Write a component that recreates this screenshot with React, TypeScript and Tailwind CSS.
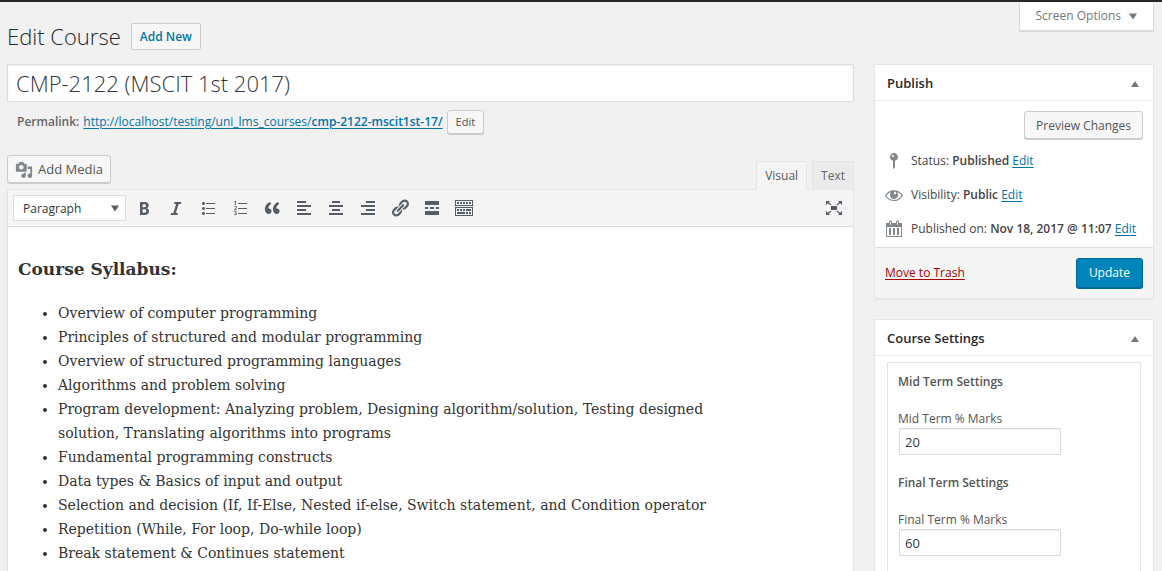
import { useState } from "react";
import type { ReactNode } from "react";

const ICONS = {
  bold: "M6 4v13h4.54c1.37 0 2.46-.33 3.26-1 .8-.66 1.2-1.58 1.2-2.77 0-.84-.17-1.51-.51-2.01s-.9-.85-1.67-1.03v-.09c.57-.1 1.02-.4 1.36-.9s.51-1.13.51-1.91c0-1.14-.39-1.98-1.17-2.5C12.75 4.26 11.5 4 9.78 4H6zm2.57 5.15V6.26h1.36c.73 0 1.27.11 1.61.32.34.22.51.58.51 1.07 0 .54-.16.92-.47 1.15s-.82.35-1.51.35h-1.5zm0 2.19h1.6c1.44 0 2.16.53 2.16 1.61 0 .6-.17 1.05-.51 1.34s-.86.43-1.57.43H8.57v-3.38z",
  italic: "M14.78 6h-2.13l-2.8 9h2.12l-.62 2H4.6l.62-2h2.14l2.8-9H8.03l.62-2h6.75z",
  bullets:
    "M5.5 7C4.67 7 4 6.33 4 5.5 4 4.68 4.67 4 5.5 4 6.32 4 7 4.68 7 5.5 7 6.33 6.32 7 5.5 7zM8 5h9v1H8V5zm-2.5 7c-.83 0-1.5-.67-1.5-1.5C4 9.68 4.67 9 5.5 9c.82 0 1.5.68 1.5 1.5 0 .83-.68 1.5-1.5 1.5zM8 10h9v1H8v-1zm-2.5 7c-.83 0-1.5-.67-1.5-1.5 0-.82.67-1.5 1.5-1.5.82 0 1.5.68 1.5 1.5 0 .83-.68 1.5-1.5 1.5zM8 15h9v1H8v-1z",
  numbers:
    "M6 7V3h-.69L4.02 4.03l.4.51.46-.37c.06-.05.16-.14.3-.28l-.02.42V7H6zm2-2h9v1H8V5zm-1.23 6.95v-.7H5.25v-.04l.51-.48c.33-.31.57-.54.7-.71.14-.17.24-.33.3-.49.07-.16.1-.33.1-.51 0-.21-.05-.4-.16-.56-.1-.16-.25-.28-.44-.37s-.41-.14-.65-.14c-.19 0-.36.02-.51.06-.15.03-.29.09-.42.15-.12.07-.29.19-.48.35l.45.54c.16-.13.31-.23.45-.3.15-.07.3-.1.45-.1.14 0 .26.03.35.11s.13.2.13.36c0 .1-.02.2-.06.3s-.1.21-.19.33c-.09.11-.29.32-.58.62l-.99 1v.58h2.76zM8 10h9v1H8v-1zm-1.29 3.95c0-.3-.12-.54-.37-.71-.24-.17-.58-.26-1-.26-.52 0-.96.13-1.33.4l.4.6c.17-.11.32-.19.46-.23.14-.05.27-.07.41-.07.38 0 .58.15.58.46 0 .2-.07.35-.22.43s-.38.12-.7.12h-.31v.66h.31c.34 0 .59.04.75.12.15.08.23.22.23.41 0 .22-.07.37-.2.47-.14.1-.35.15-.63.15-.19 0-.38-.03-.57-.08s-.36-.12-.52-.2v.74c.34.15.74.22 1.18.22.53 0 .94-.11 1.22-.33.28-.22.43-.52.43-.92 0-.27-.09-.48-.26-.64s-.42-.26-.74-.3v-.02c.27-.06.49-.19.65-.37.15-.18.23-.39.23-.65zM8 15h9v1H8v-1z",
  quote:
    "M9.49 13.22c0-.74-.2-1.38-.61-1.9-.62-.78-1.83-.88-2.53-.72-.29-1.65 1.11-3.75 2.92-4.65L7.88 4c-2.73 1.3-5.42 4.28-4.96 8.05C3.21 14.43 4.59 16 6.54 16c.85 0 1.56-.25 2.12-.75s.83-1.18.83-2.03zm8.05 0c0-.74-.2-1.38-.61-1.9-.63-.78-1.83-.88-2.53-.72-.29-1.65 1.11-3.75 2.92-4.65L15.93 4c-2.73 1.3-5.41 4.28-4.95 8.05.29 2.38 1.66 3.95 3.61 3.95.85 0 1.56-.25 2.12-.75s.83-1.18.83-2.03z",
  left: "M12 5V3H3v2h9zm5 4V7H3v2h14zm-5 4v-2H3v2h9zm5 4v-2H3v2h14z",
  center: "M14 5V3H6v2h8zm3 4V7H3v2h14zm-3 4v-2H6v2h8zm3 4v-2H3v2h14z",
  right: "M17 5V3H8v2h9zm0 4V7H3v2h14zm0 4v-2H8v2h9zm0 4v-2H3v2h14z",
  link: "M17.74 2.76c1.68 1.69 1.68 4.41 0 6.1l-1.53 1.52c-1.12 1.12-2.7 1.47-4.14 1.09l2.62-2.61.76-.77.76-.76c.84-.84.84-2.2 0-3.04-.84-.85-2.2-.85-3.04 0l-.77.76-3.38 3.38c-.37-1.44-.02-3.02 1.1-4.14l1.52-1.53c1.69-1.68 4.42-1.68 6.1 0zM8.59 13.43l5.34-5.34c.42-.42.42-1.1 0-1.52-.44-.43-1.13-.39-1.53 0l-5.33 5.34c-.42.42-.42 1.1 0 1.52.44.43 1.13.39 1.52 0zm-.76 2.29l4.14-4.15c.38 1.44.03 3.02-1.09 4.14l-1.52 1.53c-1.69 1.68-4.41 1.68-6.1 0-1.68-1.68-1.68-4.42 0-6.1l1.53-1.52c1.12-1.12 2.7-1.47 4.14-1.1l-4.14 4.15c-.85.84-.85 2.2 0 3.05.84.84 2.2.84 3.04 0z",
  more: "M17 7V3H3v4h14zM6 11V9H3v2h3zm6 0V9H8v2h4zm5 0V9h-3v2h3zm0 6v-4H3v4h14z",
  toolbar:
    "M19 2v6H1V2h18zm-1 5V3H2v4h16zM5 4v2H3V4h2zm3 0v2H6V4h2zm3 0v2H9V4h2zm3 0v2h-2V4h2zm3 0v2h-2V4h2zm2 5v9H1V9h18zm-1 8v-7H2v7h16zM5 11v2H3v-2h2zm3 0v2H6v-2h2zm3 0v2H9v-2h2zm6 0v2h-5v-2h5zm-6 3v2H3v-2h8zm3 0v2h-2v-2h2zm3 0v2h-2v-2h2z",
  expand:
    "M7 8h6v4H7zM2 3h4L4.900 4.300 7.500 6.700 6.700 7.600 4 5.200 2 7zM18 3h-4l1.100 1.300-2.600 2.400.8.900L16 5.200 18 7zM2 17h4l-1.100-1.300 2.600-2.400-.8-.9L4 14.800 2 13zM18 17h-4l1.100-1.300-2.600-2.400.8-.9L16 14.800 18 13z",
  media:
    "M13 11V4c0-.55-.45-1-1-1h-1.67L9 1H5L3.67 3H2c-.55 0-1 .45-1 1v7c0 .55.45 1 1 1h10c.55 0 1-.45 1-1zM7 4.5c1.38 0 2.5 1.12 2.5 2.5S8.38 9.5 7 9.5 4.5 8.38 4.5 7 5.62 4.5 7 4.5zM14 6h5v10.5c0 1.38-1.12 2.5-2.5 2.5S14 17.88 14 16.5s1.12-2.5 2.5-2.5c.17 0 .34.02.5.05V9h-3V6zm-4 8.05V13h2v3.5c0 1.38-1.12 2.5-2.5 2.5S7 17.88 7 16.5 8.12 14 9.5 14c.17 0 .34.02.5.05z",
  pin: "M14 6c0 1.86-1.28 3.41-3 3.86V16c0 1-2 2-2 2V9.86c-1.72-.45-3-2-3-3.86 0-2.21 1.79-4 4-4s4 1.79 4 4zM8 5c0 .55.45 1 1 1s1-.45 1-1-.45-1-1-1-1 .45-1 1z",
  eye: "M18.3 9.5C15 4.9 8.5 3.8 3.9 7.2c-1.2.9-2.2 2.1-3 3.4.2.4.5.8.8 1.2 3.3 4.6 9.6 5.6 14.2 2.4.9-.7 1.7-1.4 2.4-2.4.3-.4.5-.8.8-1.2-.3-.4-.5-.8-.8-1.1zm-8.2-2.3c.5-.5 1.3-.5 1.8 0s.5 1.3 0 1.8-1.3.5-1.8 0-.5-1.3 0-1.8zm-.1 7.7c-3.1 0-6-1.6-7.7-4.2C3.5 9 5.1 7.8 7 7.2c-.7.8-1 1.7-1 2.7 0 2.2 1.7 4.1 4 4.1 2.2 0 4.1-1.7 4.1-4v-.1c0-1-.4-2-1.1-2.7 1.9.6 3.5 1.8 4.7 3.5-1.7 2.6-4.6 4.2-7.7 4.2z",
  calendar:
    "M15 4h3v14H2V4h3V3c0-.83.67-1.5 1.5-1.5S8 2.17 8 3v1h4V3c0-.83.67-1.5 1.5-1.5S15 2.17 15 3v1zM6 3v2.5c0 .28.22.5.5.5s.5-.22.5-.5V3c0-.28-.22-.5-.5-.5S6 2.72 6 3zm7 0v2.5c0 .28.22.5.5.5s.5-.22.5-.5V3c0-.28-.22-.5-.5-.5s-.5.22-.5.5zm4 14V8H3v9h14zM7 16V9H5v7h2zm4 0V9H9v7h2zm4 0V9h-2v7h2z",
};

type IconName = keyof typeof ICONS;

function Icon({ name, className = "size-5" }: { name: IconName; className?: string }) {
  return (
    <svg viewBox="0 0 20 20" fill="currentColor" aria-hidden="true" className={`shrink-0 ${className}`}>
      <path d={ICONS[name]} />
    </svg>
  );
}

function Triangle({ up = false, className = "" }: { up?: boolean; className?: string }) {
  return (
    <svg viewBox="0 0 8 7" fill="currentColor" aria-hidden="true" className={`h-[7px] w-2 shrink-0 ${className}`}>
      <path d={up ? "M4 1 8 7H0z" : "M0 0.500h8L4 6.500z"} />
    </svg>
  );
}

const TOOLS: { icon: IconName; label: string }[] = [
  { icon: "bold", label: "Bold" },
  { icon: "italic", label: "Italic" },
  { icon: "bullets", label: "Bulleted list" },
  { icon: "numbers", label: "Numbered list" },
  { icon: "quote", label: "Blockquote" },
  { icon: "left", label: "Align left" },
  { icon: "center", label: "Align center" },
  { icon: "right", label: "Align right" },
  { icon: "link", label: "Insert link" },
  { icon: "more", label: "Insert Read More tag" },
  { icon: "toolbar", label: "Toolbar toggle" },
];

const SYLLABUS = [
  "Overview of computer programming",
  "Principles of structured and modular programming",
  "Overview of structured programming languages",
  "Algorithms and problem solving",
  "Program development: Analyzing problem, Designing algorithm/solution, Testing designed solution, Translating algorithms into programs",
  "Fundamental programming constructs",
  "Data types & Basics of input and output",
  "Selection and decision (If, If-Else, Nested if-else, Switch statement, and Condition operator",
  "Repetition (While, For loop, Do-while loop)",
  "Break statement & Continues statement",
];

const BUTTON = "rounded-[3px] border border-[#ccc] bg-[#f7f7f7] pt-px text-[#555] shadow-[0_1px_0_#ccc]";
const LINK = "text-[#0073aa] underline underline-offset-2";

function Panel({ title, className = "", children }: { title: string; className?: string; children: ReactNode }) {
  return (
    <section className={`flex flex-col border border-[#e5e5e5] bg-white shadow-[0_1px_1px_rgba(0,0,0,0.04)] ${className}`}>
      <header className="flex h-9 items-center justify-between border-b border-[#eee] pt-[2px] pr-[14px] pl-3">
        <h2 className="text-[13px] font-semibold text-[#23282d]">{title}</h2>
        <button type="button" aria-label={`Toggle panel: ${title}`} className="text-[#72777c]">
          <Triangle up />
        </button>
      </header>
      {children}
    </section>
  );
}

function StatusRow({ icon, label, value }: { icon: IconName; label: string; value: string }) {
  return (
    <div className="flex h-[34px] items-center gap-[7px] px-[9px] whitespace-nowrap">
      <Icon name={icon} className="size-5 text-[#82878c]" />
      <p>
        {label}: <b className="font-semibold">{value}</b>{" "}
        <a href="#edit" className={LINK}>
          Edit
        </a>
      </p>
    </div>
  );
}

function MarksField({ id, heading, label, initial }: { id: string; heading: string; label: string; initial: string }) {
  const [value, setValue] = useState(initial);
  return (
    <div className="flex h-[101px] flex-col items-start text-[#555]">
      <h3 className="mb-[17px] leading-5 font-semibold">{heading}</h3>
      <label htmlFor={id} className="leading-[19px]">
        {label}
      </label>
      <input
        id={id}
        value={value}
        onChange={(e) => setValue(e.target.value)}
        className="ml-px h-[27px] w-[162px] border border-[#ddd] bg-white px-[5px] text-[13px] text-[#32373c] shadow-[inset_0_1px_2px_rgba(0,0,0,0.07)]"
      />
    </div>
  );
}

export default function App() {
  const [title, setTitle] = useState("CMP-2122 (MSCIT 1st 2017)");
  return (
    <div className="flex min-h-screen flex-col border-t-2 border-[#23282d] bg-[#f1f1f1] pr-2 pl-[7px] font-['Open_Sans','Noto_Sans',sans-serif] text-[12px] text-[#444]">
      <header className="flex h-[62px] items-start justify-between">
        <div className="flex items-center gap-[10px] pt-[19px]">
          <h1 className="text-[22px] leading-[30px] font-light text-[#23282d]">Edit Course</h1>
          <a
            href="#new"
            className="flex h-[27px] items-center rounded-[2px] border border-[#ccc] bg-[#f7f7f7] px-2 pt-px font-semibold text-[#0073aa]"
          >
            Add New
          </a>
        </div>
        <button
          type="button"
          className="flex h-[29px] items-center gap-2 border border-t-0 border-[#ddd] bg-white px-4 text-[#72777c] shadow-[0_1px_1px_rgba(0,0,0,0.1)]"
        >
          Screen Options
          <Triangle />
        </button>
      </header>

      <div className="flex flex-1 gap-5">
        <main className="flex min-w-0 flex-1 flex-col">
          <input
            aria-label="Course title"
            value={title}
            onChange={(e) => setTitle(e.target.value)}
            className="h-[38px] w-full border border-[#ddd] bg-white px-2 text-[22px] font-light text-[#32373c] shadow-[inset_0_1px_2px_rgba(0,0,0,0.07)]"
          />
          <div className="mt-2 flex h-6 items-center gap-1 pl-[10px] text-[#666]">
            <strong className="font-semibold">Permalink:</strong>
            <a href="#permalink" className={LINK}>
              http://localhost/testing/uni_lms_courses/<b className="font-semibold">cmp-2122-mscit1st-17/</b>
            </a>
            <button type="button" className={`h-6 px-2 text-[11px] ${BUTTON}`}>
              Edit
            </button>
          </div>

          <div className="mt-[21px] flex h-[34px] items-start justify-between">
            <button type="button" className={`flex h-7 items-center gap-[5px] px-[7px] text-[13px] ${BUTTON}`}>
              <Icon name="media" className="size-[18px] text-[#82878c]" />
              Add Media
            </button>
            <div className="flex gap-[5px] self-end">
              <button
                type="button"
                className="relative z-10 -mb-px h-[29px] border border-b-0 border-[#e5e5e5] bg-[#f5f5f5] px-2 text-[#555]"
              >
                Visual
              </button>
              <button type="button" className="h-7 border border-b-0 border-[#e5e5e5] bg-[#ebebeb] px-2 text-[#666]">
                Text
              </button>
            </div>
          </div>

          <div className="flex flex-1 flex-col border border-b-0 border-[#e5e5e5] bg-white">
            <div className="flex h-[37px] items-center border-b border-[#ddd] bg-[#f5f5f5] pr-[9px] pl-[5px] text-[#555d66]">
              <div className="relative mr-2">
                <select
                  aria-label="Paragraph style"
                  className="h-[26px] w-[113px] appearance-none border border-[#ddd] bg-white pt-px pl-[9px] text-[12px] text-[#32373c]"
                >
                  <option>Paragraph</option>
                  <option>Heading 1</option>
                  <option>Heading 2</option>
                </select>
                <Triangle className="pointer-events-none absolute top-[10px] right-[7px]" />
              </div>
              <div className="flex flex-1 gap-3">
                {TOOLS.map((tool) => (
                  <button key={tool.icon} type="button" aria-label={tool.label}>
                    <Icon name={tool.icon} />
                  </button>
                ))}
              </div>
              <button type="button" aria-label="Distraction-free writing mode">
                <Icon name="expand" />
              </button>
            </div>

            <article className="px-[10px] pt-[30px] font-['DejaVu_Serif',serif] text-[#333]">
              <h3 className="text-[17px] leading-6 font-bold">Course Syllabus:</h3>
              <ul className="mt-5 max-w-[710px] list-disc pl-10 text-[14px] leading-6">
                {SYLLABUS.map((item) => (
                  <li key={item}>{item}</li>
                ))}
              </ul>
            </article>
          </div>
        </main>

        <aside className="flex w-[280px] shrink-0 flex-col gap-5">
          <Panel title="Publish">
            <div className="flex justify-end px-[10px] pt-[10px] pb-[5px]">
              <button type="button" className={`h-7 px-[11px] ${BUTTON}`}>
                Preview Changes
              </button>
            </div>
            <StatusRow icon="pin" label="Status" value="Published" />
            <StatusRow icon="eye" label="Visibility" value="Public" />
            <StatusRow icon="calendar" label="Published on" value="Nov 18, 2017 @ 11:07" />
            <footer className="mt-px flex h-[51px] items-center justify-between border-t border-[#ddd] bg-[#f5f5f5] px-[10px]">
              <a href="#trash" className="text-[#a00] underline underline-offset-2">
                Move to Trash
              </a>
              <button
                type="button"
                className="h-[30px] rounded-[3px] border border-[#006799] bg-[#0085ba] px-3 text-white shadow-[0_1px_0_#006799]"
              >
                Update
              </button>
            </footer>
          </Panel>

          <Panel title="Course Settings" className="flex-1 border-b-0">
            <div className="mx-3 mt-[6px] flex-1 border border-b-0 border-[#e5e5e5] px-[10px] pt-[9px]">
              <MarksField id="mid-marks" heading="Mid Term Settings" label="Mid Term % Marks" initial="20" />
              <MarksField id="final-marks" heading="Final Term Settings" label="Final Term % Marks" initial="60" />
            </div>
          </Panel>
        </aside>
      </div>
    </div>
  );
}
